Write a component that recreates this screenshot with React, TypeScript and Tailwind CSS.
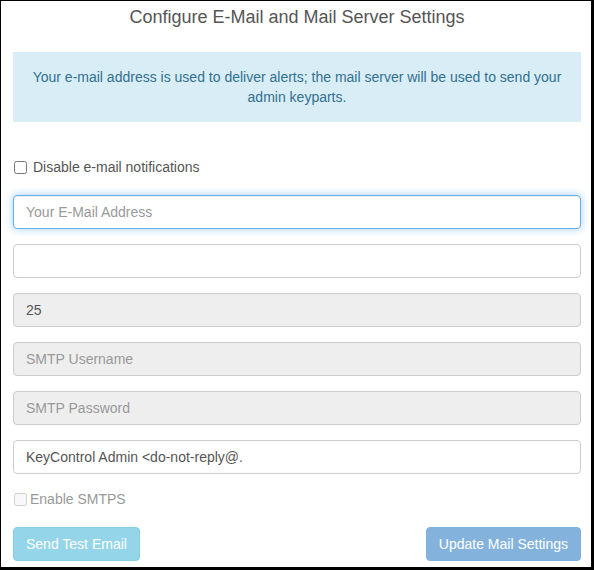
import React from 'react';

const fieldBase =
  'block w-full h-[34px] px-[12px] rounded-[4px] border text-[14px] text-[#555] placeholder:text-[#999] outline-none';

export default function App() {
  return (
    <div className="w-[594px] h-[570px] box-border bg-white border-black border-l border-t border-r-[3px] border-b-[3px] font-['Liberation_Sans',Arial,sans-serif] overflow-hidden">
      <div className="pl-[12px] pr-[10px]">
        <h4 className="pt-[6px] text-center text-[18px] leading-[20px] text-[#555]">
          Configure E-Mail and Mail Server Settings
        </h4>

        <div className="mt-[25px] px-[15px] py-[15px] bg-[#d9edf7] text-center text-[14px] leading-[20px] text-[#31708f]">
          Your e-mail address is used to deliver alerts; the mail server will be used to send your admin keyparts.
        </div>

        <label className="mt-[35px] flex items-center h-[20px] text-[14px] text-[#555]">
          <input type="checkbox" className="m-0 ml-px w-[13px] h-[13px]" />
          <span className="ml-[6px]">Disable e-mail notifications</span>
        </label>

        <div className="mt-[18px] flex flex-col gap-[15px]">
          <input
            type="text"
            placeholder="Your E-Mail Address"
            className={`${fieldBase} bg-white border-[#66afe9] shadow-[inset_0_1px_1px_rgba(0,0,0,0.075),0_0_8px_rgba(102,175,233,0.6)]`}
          />
          <input type="text" className={`${fieldBase} bg-white border-[#ccc]`} />
          <input type="text" disabled defaultValue="25" className={`${fieldBase} bg-[#eee] border-[#ccc]`} />
          <input type="text" disabled placeholder="SMTP Username" className={`${fieldBase} bg-[#eee] border-[#ccc]`} />
          <input type="password" disabled placeholder="SMTP Password" className={`${fieldBase} bg-[#eee] border-[#ccc]`} />
          <input
            type="text"
            defaultValue="KeyControl Admin <do-not-reply@."
            className={`${fieldBase} bg-white border-[#ccc]`}
          />
        </div>

        <label className="mt-[15px] flex items-center h-[20px] text-[14px] text-[#999]">
          <input type="checkbox" disabled className="m-0 ml-px w-[13px] h-[13px]" />
          <span className="ml-[3px]">Enable SMTPS</span>
        </label>

        <div className="mt-[18px] flex justify-between">
          <button
            disabled
            className="h-[34px] px-[12px] rounded-[4px] border border-[#46b8da] bg-[#5bc0de] opacity-65 text-white text-[14px]"
          >
            Send Test Email
          </button>
          <button
            disabled
            className="h-[34px] px-[12px] rounded-[4px] border border-[#3a8acd] bg-[#428bca] opacity-65 text-white text-[14px]"
          >
            Update Mail Settings
          </button>
        </div>
      </div>
    </div>
  );
}
